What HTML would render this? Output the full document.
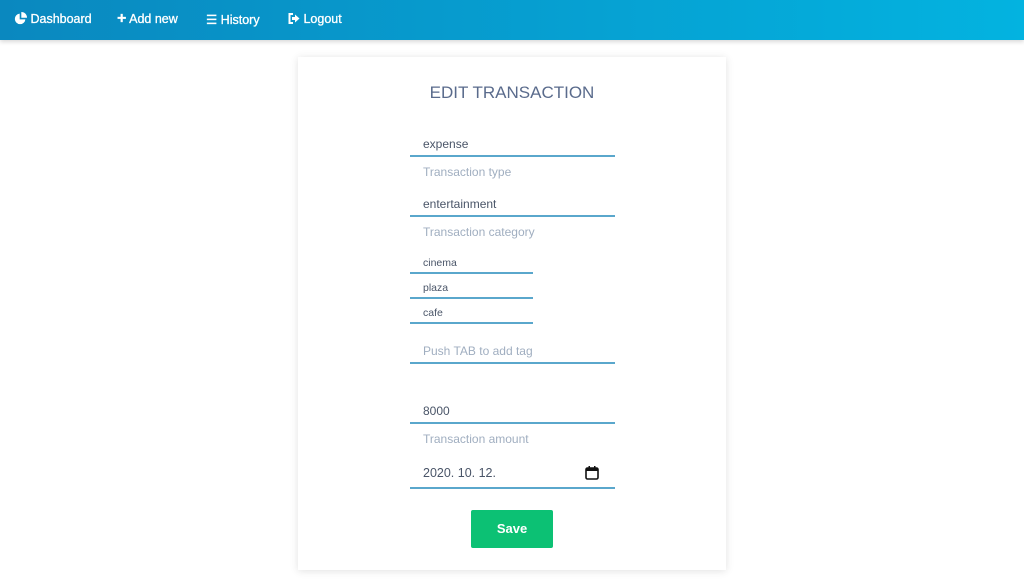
<!DOCTYPE html><html><head><style>
body{margin:0;width:1024px;height:580px;background:#fff;font-family:"Liberation Sans",sans-serif;position:relative;overflow:hidden}
.nav{position:absolute;left:0;top:0;width:1024px;height:40px;background:linear-gradient(90deg,#0a88bf,#03b3e0);box-shadow:0 2px 4px rgba(0,0,0,.15)}
.nav span{position:absolute;top:12px;color:#fff;font-size:12.5px;-webkit-text-stroke:0.3px #fff}
.card{position:absolute;left:298px;top:57px;width:428px;height:513px;background:#fff;box-shadow:0 1px 8px rgba(0,0,0,.12)}
.t{position:absolute;left:423px;color:#4a5568;font-size:12px}
.l{position:absolute;left:423px;color:#a0aec0;font-size:12px}
.s{position:absolute;left:423px;color:#4a5568;font-size:10.5px}
.u{position:absolute;left:410px;width:205px;height:2px;background:#5aa7cc}
.us{position:absolute;left:410px;width:123px;height:2px;background:#5aa7cc}
</style></head><body>
<div class="nav">
<span style="left:14px"><svg width="13" height="13" viewBox="0 0 16 16" style="vertical-align:-2px"><path d="M7 2A6.5 6.5 0 1 0 14 9H7Z" fill="#fff"/><path d="M9 0V7H16A7 7 0 0 0 9 0Z" fill="#fff"/></svg> Dashboard</span>
<span style="left:117px"><b style="font-size:16px;line-height:10px">+</b> Add new</span>
<span style="left:206px">☰ History</span>
<span style="left:288px"><svg width="12" height="11" viewBox="0 0 12 11" style="vertical-align:-1px"><path d="M5 1H1.5V10H5" stroke="#fff" stroke-width="2" fill="none"/><path d="M4 4H7V1.5L11.5 5.5L7 9.5V7H4Z" fill="#fff"/></svg> Logout</span>
</div>
<div class="card"></div>
<div style="position:absolute;left:298px;width:428px;top:83px;text-align:center;color:#5a6b8c;font-size:17px">EDIT TRANSACTION</div>
<div class="t" style="top:137px">expense</div><div class="u" style="top:155px"></div>
<div class="l" style="top:165px">Transaction type</div>
<div class="t" style="top:197px">entertainment</div><div class="u" style="top:215px"></div>
<div class="l" style="top:225px">Transaction category</div>
<div class="s" style="top:257px">cinema</div><div class="us" style="top:272px"></div>
<div class="s" style="top:282px">plaza</div><div class="us" style="top:297px"></div>
<div class="s" style="top:307px">cafe</div><div class="us" style="top:322px"></div>
<div class="l" style="top:344px">Push TAB to add tag</div><div class="u" style="top:362px"></div>
<div class="t" style="top:404px">8000</div><div class="u" style="top:422px"></div>
<div class="l" style="top:432px">Transaction amount</div>
<div class="t" style="top:466px;font-size:12.5px">2020. 10. 12.</div>
<svg style="position:absolute;left:585px;top:466px" width="14" height="14" viewBox="0 0 14 14"><rect x="1" y="2" width="12" height="11" rx="1.5" fill="none" stroke="#111" stroke-width="1.6"/><rect x="1" y="2" width="12" height="3" fill="#111"/><rect x="3.5" y="0" width="1.5" height="3" fill="#111"/><rect x="9" y="0" width="1.5" height="3" fill="#111"/></svg>
<div class="u" style="top:487px"></div>
<div style="position:absolute;left:471px;top:510px;width:82px;height:38px;background:#0cc174;border-radius:2px;color:#fff;font-size:13px;font-weight:bold;text-align:center;line-height:38px">Save</div>
</body></html>
